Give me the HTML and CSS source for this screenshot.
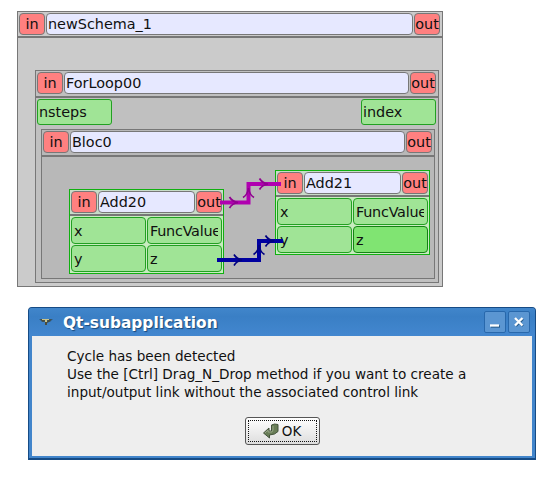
FILE: index.html
```html
<!DOCTYPE html>
<html lang="en">
<head>
<meta charset="utf-8">
<title>Schema editor</title>
<link rel="stylesheet" href="styles.css">
</head>
<body>
<main class="schema">
  <header class="head"><span class="gate">in</span><span class="name">newSchema_1</span><span class="gate">out</span></header>
  <section class="loop">
    <header class="head"><span class="gate">in</span><span class="name">ForLoop00</span><span class="gate">out</span></header>
    <div class="loop-ports"><span class="port">nsteps</span><span class="port">index</span></div>
    <section class="bloc">
      <header class="head"><span class="gate">in</span><span class="name">Bloc0</span><span class="gate">out</span></header>
    </section>
  </section>
  <article class="node add20">
    <header class="head"><span class="gate">in</span><span class="name">Add20</span><span class="gate">out</span></header>
    <div class="ports"><span class="port">x</span><span class="port">FuncValue</span><span class="port">y</span><span class="port">z</span></div>
  </article>
  <article class="node add21">
    <header class="head"><span class="gate">in</span><span class="name">Add21</span><span class="gate">out</span></header>
    <div class="ports"><span class="port">x</span><span class="port">FuncValue</span><span class="port">y</span><span class="port active">z</span></div>
  </article>
  <svg class="links" width="426" height="276" viewBox="17 11 426 276">
    <g class="control">
      <path class="wire" d="M220 202.500H248.500V184H281"/>
      <path class="tip" d="M229.500 197Q232 201.500 238 202.500Q232 203.500 229.500 208M243 197.500Q247.500 195 248.500 188Q249.500 195 254 197.500M259.500 178.500Q262 183 268 184Q262 185 259.500 189.500"/>
    </g>
    <g class="data">
      <path class="wire" d="M217 260H259V241H283"/>
      <path class="tip" d="M234 254.500Q236.500 259 242 260Q236.500 261 234 265.500M253.500 254.500Q258 252 259 245Q260 252 264.500 254.500M265.500 235.500Q268 240 274 241Q268 242 265.500 246.500"/>
    </g>
  </svg>
</main>

<section class="dialog">
  <header class="titlebar">
    <svg class="app-icon" width="16" height="14" viewBox="0 0 16 14">
      <path fill="#315f87" d="M1 4h14l-3 3H4z"/>
      <path fill="#4a4c3c" d="M2 4h4l1 2-2 1zM10 5l4-1-3 3-2 1v2H7V7h2z"/>
      <path fill="#c9c58c" d="M4 4h7v1H9v2H7V5H4z"/>
    </svg>
    <h1>Qt-subapplication</h1>
    <button class="tool" aria-label="Minimize"><svg width="22" height="22" viewBox="0 0 22 22"><path class="shade" d="M7 15.500h9"/><path class="mark" d="M6 14.500h9"/></svg></button>
    <button class="tool" aria-label="Close"><svg width="22" height="22" viewBox="0 0 22 22"><path class="shade" d="M8 8l7 7M15 8l-7 7"/><path class="mark" d="M7 7l7.500 7.500M14.500 7L7 14.500"/></svg></button>
  </header>
  <div class="content">
    <p>Cycle has been detected<br>Use the [Ctrl] Drag_N_Drop method if you want to create a<br>input/output link without the associated control link</p>
    <button class="ok"><svg width="18" height="18" viewBox="0 0 18 18"><path fill="#687d57" stroke="#43533b" d="M9.500 3l3-1 3.500.5v7L12.500 12l-5 1v3L1.500 11 7 6v3h2.500z"/><path fill="none" stroke="#96a486" d="M3 11l3-3v2h4l1-2V4"/></svg><span>OK</span></button>
  </div>
</section>
</body>
</html>
```
FILE: styles.css
```css
* { box-sizing: border-box; }
html, body { margin: 0; }
body {
  width: 540px;
  height: 485px;
  padding: 11px 0 0 17px;
  overflow: hidden;
  background: #fff;
  color: #101010;
  font-family: "DejaVu Sans", sans-serif;
  font-size: 14.400px;
}
.schema {
  position: relative;
  width: 426px;
  height: 276px;
  border: 1px solid #777;
  background: #cbcbcb;
}
.head {
  display: flex;
  gap: 1px;
  height: 26px;
  padding: 1px 2px 0 1px;
  border-bottom: 2px solid #777;
}
.gate, .name {
  height: 22px;
  border: 1px solid #777;
  border-radius: 4px;
  line-height: 20px;
  white-space: nowrap;
}
.gate {
  flex: 0 0 26px;
  display: flex;
  justify-content: center;
  background: #ff8080;
}
.name { flex: 1; padding-left: 1px; background: #e6e8ff; }
.loop {
  width: 404px;
  height: 213px;
  margin: 32px 0 0 17px;
  border: 1px solid #777;
  background: #c0c0c0;
}
.loop .head { height: 27px; }
.loop-ports {
  display: flex;
  justify-content: space-between;
  padding: 1px 2px 0 1px;
}
.port {
  width: 75px;
  height: 26px;
  padding-left: 1px;
  overflow: hidden;
  border: 1px solid #22a022;
  border-radius: 3px;
  background: #a0e496;
  line-height: 24px;
  white-space: nowrap;
}
.bloc {
  width: 394px;
  height: 150px;
  margin: 4px 0 0 5px;
  border: 1px solid #777;
  background: #b8b8b8;
}
.node {
  position: absolute;
  width: 155px;
  height: 85px;
  border: 1px solid #10b010;
  background: #c8ecc0;
}
.add20 { left: 51px; top: 177px; }
.add21 { left: 257px; top: 158px; }
.node .head { padding-right: 1px; background: #c8dcc8; }
.ports {
  display: grid;
  grid-template-columns: 75px 75px;
  gap: 1px;
  padding: 1px;
}
.ports .port {
  height: 27px;
  padding-left: 2px;
  border-radius: 4px;
  line-height: 26px;
}
.ports .port:nth-child(2) {
  padding-right: 3px;
  overflow: clip;
  overflow-clip-margin: content-box;
  letter-spacing: -0.250px;
}
.ports .active { border-color: #168016; background: #80e472; }
.links { position: absolute; left: -1px; top: -1px; }
.wire { fill: none; stroke-width: 4; }
.tip { fill: none; stroke-width: 1.700; }
.control .wire { stroke: #b000b0; }
.control .tip { stroke: #900090; }
.data .wire { stroke: #0000a0; }
.data .tip { stroke: #000080; }
.dialog {
  width: 508px;
  height: 153px;
  margin: 20px 0 0 11px;
  border: 1px solid #164b85;
  border-bottom-width: 2px;
  border-radius: 4px 4px 0 0;
  background: #4285cb;
}
.titlebar {
  display: flex;
  align-items: center;
  height: 28px;
  padding: 0 5px 0 9px;
  border-radius: 3px 3px 0 0;
  background: linear-gradient(#4186cb, #3a7fc5 30%, #4387cf);
}
h1 {
  flex: 1;
  margin: 2px 0 0 9px;
  color: #fff;
  font-size: 15.400px;
  line-height: 26px;
  text-shadow: 1px 1px 1px #184878;
}
.tool {
  width: 22px;
  height: 22px;
  margin: 0 0 0 2px;
  padding: 0;
  border: 1px solid #2868ac;
  border-radius: 2px;
  background: #5b96d2;
}
.tool svg { display: block; margin: -1px; }
.mark, .shade { fill: none; stroke: #fff; stroke-width: 2.300; }
.shade { stroke: #245888; }
.content {
  height: 120px;
  margin: 0 3px;
  padding: 11px 0 0 35px;
  background: #eee;
}
p { margin: 0; font-size: 13.580px; line-height: 18px; white-space: nowrap; }
.ok {
  display: flex;
  align-items: center;
  justify-content: center;
  gap: 2px;
  width: 75px;
  height: 28px;
  margin: 16px 0 0 178px;
  padding: 0 2px 0 0;
  border: 1px solid #555;
  border-radius: 3px;
  outline: 1px dotted #111;
  outline-offset: -4px;
  background: linear-gradient(#fff, #ddd);
  color: #111;
  font: 13.500px "DejaVu Sans", sans-serif;
}
```
